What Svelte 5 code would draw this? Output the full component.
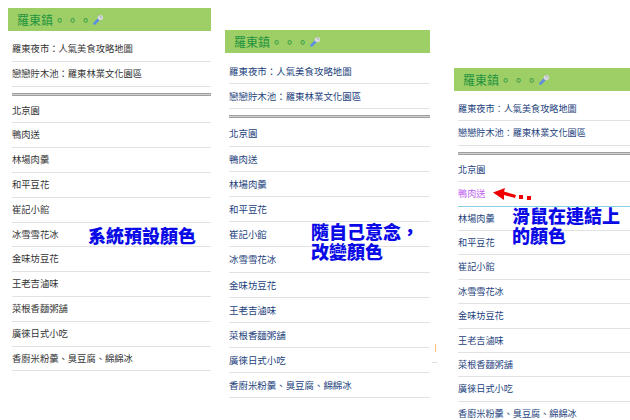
<script>
  const top = ['羅東夜市\uFF1A人氣美食攻略地圖', '戀戀貯木池\uFF1A羅東林業文化園區'];
  const items = ['北京園', '鴨肉送', '林場肉羹', '和平豆花', '崔記小館', '冰雪雪花冰', '金味坊豆花', '王老吉滷味', '菜根香麵粥舖', '廣徠日式小吃', '香廚米粉羹、臭豆腐、綿綿冰'];
  const panels = [
    { cls: 'p1', tone: 'plain' },
    { cls: 'p2', tone: 'navy' },
    { cls: 'p3', tone: 'navy', hover: '鴨肉送' },
  ];
</script>

<div class="page">
  {#each panels as p}
    <section class="panel {p.cls} {p.tone}">
      <header class="head">
        <span class="title">羅東鎮</span>
        <span class="dots">。。。</span>
        <svg class="tool" width="11" height="11" viewBox="0 0 11 11">
          <path d="M1.5 9.5 L5.5 5.5" stroke="#5f8ee0" stroke-width="2.6" stroke-linecap="round" />
          <circle cx="7.4" cy="3.6" r="2.7" fill="#d5d9dc" />
          <path d="M6.5 1.5 L8.8 3.6" stroke="#9aa4ac" stroke-width="1" />
        </svg>
      </header>
      <ul class="first">
        {#each top as t}
          <li>{t}</li>
        {/each}
      </ul>
      <div class="rule"></div>
      <ul>
        {#each items as t}
          <li class:hover={t === p.hover}>{t}</li>
        {/each}
      </ul>
    </section>
  {/each}

  <div class="note n1">系統預設顏色</div>
  <div class="note n2">隨自己意念{'\uFF0C'}<br />改變顏色</div>
  <div class="note n3">滑鼠在連結上<br />的顏色</div>
  <svg class="arrow" width="42" height="16" viewBox="0 0 42 16">
    <path d="M1 5.5 L13 1 L12 4.5 L24 8 L23 11 L12 8 L12 13 Z" fill="#f00000" />
    <rect x="27" y="8" width="4" height="4" fill="#f00000" />
    <rect x="35" y="9" width="4" height="4" fill="#f00000" />
  </svg>
  <i class="scrap orange"></i>
  <i class="scrap grey"></i>
</div>

<style>
  :global(body) { margin: 0; background: #fff; }
  .page {
    position: relative;
    width: 630px;
    height: 420px;
    overflow: hidden;
    display: flex;
    align-items: flex-start;
    font-family: "Noto Sans CJK TC", "Liberation Sans", sans-serif;
  }
  .panel { flex: none; }
  .p1 { width: 203px; margin: 8px 0 0 8px; --row: 23.8px; --size: 9.3px; }
  .p2 { width: 205px; margin: 30px 0 0 14px; --row: 24.2px; --size: 9.45px; }
  .p3 { width: 176px; margin: 68px 0 0 24px; --row: 23.4px; --size: 9.15px; }
  .head {
    height: 23px;
    background: #9dcf66;
    display: flex;
    align-items: center;
    padding-left: 9px;
    color: #22933f;
  }
  .title { font-size: 12px; }
  .dots { font-size: 13px; width: 39px; white-space: nowrap; }
  .tool { margin-left: 1px; }
  ul { list-style: none; margin: 0; padding: 0 0 0 4px; }
  ul.first { padding-top: 6px; }
  li {
    height: var(--row);
    line-height: var(--row);
    border-bottom: 1px solid #e2e2e2;
    font-size: var(--size);
    white-space: nowrap;
  }
  .plain li { color: #333; }
  .navy li { color: #1c3f7c; }
  li.hover { color: #c060f0; border-bottom-color: #86d3e8; }
  .rule {
    height: 1px;
    margin: 6px 0 3px 4px;
    background: #cfcfcf;
    border-top: 1px solid #a0a0a0;
    border-bottom: 1px solid #a0a0a0;
  }
  .note {
    position: absolute;
    color: #0a0ae6;
    font-size: 18px;
    font-weight: 900;
    line-height: 20px;
    white-space: nowrap;
  }
  .n1 { left: 88px; top: 225px; }
  .n2 { left: 311px; top: 221px; }
  .n3 { left: 512px; top: 205px; }
  .arrow { position: absolute; left: 492px; top: 187px; }
  .scrap { position: absolute; display: block; }
  .orange { left: 435px; top: 344px; width: 1px; height: 8px; background: #f8c070; }
  .grey { left: 432px; top: 362px; width: 5px; height: 1px; background: #ddd; }
</style>
